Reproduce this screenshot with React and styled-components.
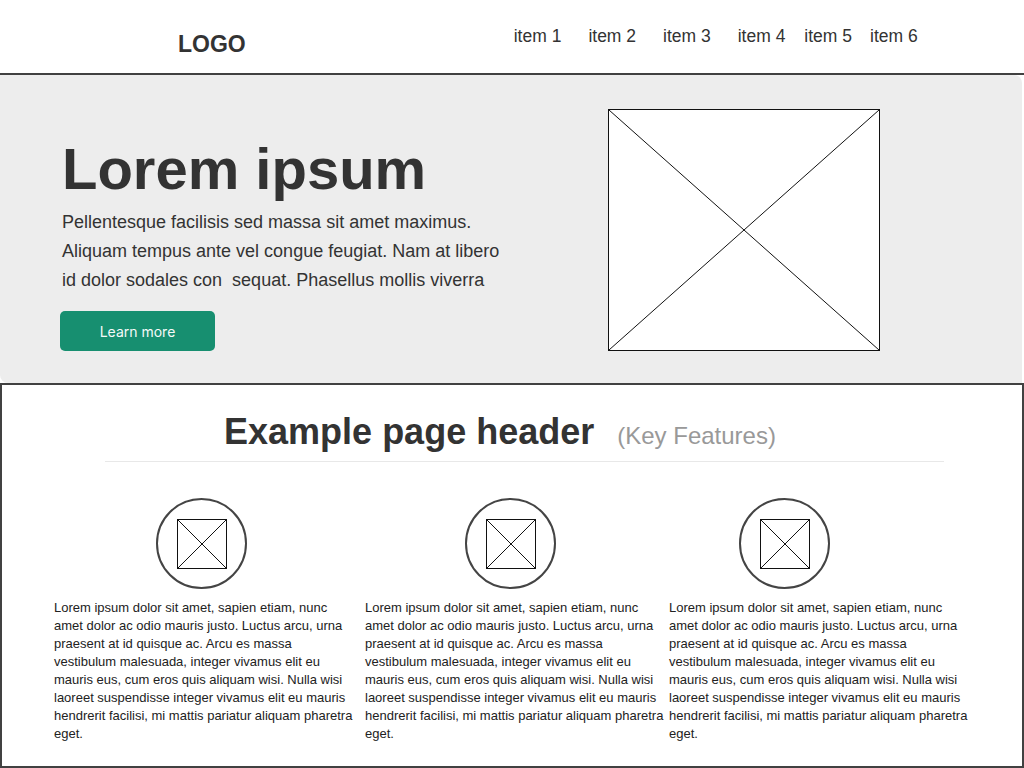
import React from "react";
import styled, { createGlobalStyle } from "styled-components";

const GlobalStyle = createGlobalStyle`
  html, body {
    margin: 0;
    padding: 0;
    background: #fff;
  }
  body {
    font-family: "Liberation Sans", Arial, sans-serif;
    color: #333;
  }
  * {
    box-sizing: border-box;
  }
`;

const Page = styled.div`
  width: 1024px;
  height: 768px;
  overflow: hidden;
`;

const Header = styled.header`
  height: 75px;
  display: flex;
  align-items: flex-start;
  padding-left: 178px;
  border-bottom: 2px solid #414141;
`;

const Logo = styled.div`
  margin-top: 33px;
  font-size: 23px;
  line-height: 1;
  font-weight: bold;
  color: #333;
`;

const Nav = styled.nav`
  display: flex;
  margin-left: 268px;
  margin-top: 28px;
`;

const NavItem = styled.a`
  margin-left: ${(props) => props.$gap}px;
  font-size: 17.5px;
  line-height: 1;
  color: #333;
  text-decoration: none;
`;

const Hero = styled.section`
  height: 308px;
  display: grid;
  grid-template-columns: 546px 272px;
  align-items: start;
  padding: 34px 0 0 62px;
  margin-right: 2px;
  background: #ededed;
  border-radius: 0 8px 0 8px;
`;

const HeroText = styled.div`
  padding-top: 31px;
`;

const HeroTitle = styled.h1`
  margin: 0;
  font-size: 58px;
  line-height: 1;
  font-weight: bold;
  color: #333;
`;

const HeroCopy = styled.p`
  margin: 10px 0 0;
  max-width: 450px;
  font-size: 18px;
  line-height: 29px;
  color: #333;
  white-space: pre-line;
`;

const Button = styled.button`
  margin: 16px 0 0 -2px;
  width: 155px;
  height: 40px;
  border: none;
  border-radius: 5px;
  background: #178f70;
  color: #f4faf8;
  font-family: Inter, "Liberation Sans", sans-serif;
  font-size: 14px;
  cursor: pointer;
`;

const Placeholder = styled.div`
  width: ${(props) => props.$w}px;
  height: ${(props) => props.$h}px;
  border: 1px solid #111;
  background: #fff;
  display: block;

  svg {
    display: block;
    width: 100%;
    height: 100%;
  }
`;

const Features = styled.section`
  height: 385px;
  border: 2px solid #414141;
  background: #fff;
`;

const TitleRow = styled.div`
  display: flex;
  justify-content: center;
  align-items: baseline;
  gap: 23px;
  padding: 29px 24px 0 0;
`;

const SectionTitle = styled.h2`
  margin: 0;
  font-size: 36px;
  line-height: 1;
  font-weight: bold;
  color: #333;
`;

const Subtitle = styled.span`
  font-size: 24px;
  color: #999;
`;

const Divider = styled.hr`
  margin: 11px 78px 0 103px;
  border: none;
  border-top: 1px solid #e8e8e8;
`;

const Columns = styled.div`
  display: grid;
  grid-template-columns: 311px 304px 320px;
  padding-left: 52px;
  margin-top: 36px;
`;

const Column = styled.div`
  display: flex;
  flex-direction: column;
`;

const Circle = styled.div`
  width: 91px;
  height: 91px;
  margin-left: ${(props) => props.$offset}px;
  border: 2px solid #444;
  border-radius: 50%;
  display: flex;
  align-items: center;
  justify-content: center;
`;

const ColumnText = styled.p`
  margin: 10px 0 0;
  max-width: 303px;
  font-size: 13px;
  line-height: 18px;
  color: #222;
`;

const Cross = () => (
  <svg viewBox="0 0 100 100" preserveAspectRatio="none">
    <line x1="0" y1="0" x2="100" y2="100" stroke="#111" strokeWidth="1" vectorEffect="non-scaling-stroke" />
    <line x1="100" y1="0" x2="0" y2="100" stroke="#111" strokeWidth="1" vectorEffect="non-scaling-stroke" />
  </svg>
);

const navItems = [
  { label: "item 1", gap: 0 },
  { label: "item 2", gap: 27 },
  { label: "item 3", gap: 27 },
  { label: "item 4", gap: 27 },
  { label: "item 5", gap: 19 },
  { label: "item 6", gap: 18 },
];

const featureText =
  "Lorem ipsum dolor sit amet, sapien etiam, nunc amet dolor ac odio mauris justo. Luctus arcu, urna praesent at id quisque ac. Arcu es massa vestibulum malesuada, integer vivamus elit eu mauris eus, cum eros quis aliquam wisi. Nulla wisi laoreet suspendisse integer vivamus elit eu mauris hendrerit facilisi, mi mattis pariatur aliquam pharetra eget.";

const heroCopy =
  "Pellentesque facilisis sed massa sit amet maximus.\nAliquam tempus ante vel congue feugiat. Nam at libero\nid dolor sodales con\u00a0 sequat. Phasellus mollis viverra";

const features = [{ offset: 102 }, { offset: 100 }, { offset: 70 }];

const App = () => {
  return (
    <Page>
      <GlobalStyle />
      <Header>
        <Logo>LOGO</Logo>
        <Nav>
          {navItems.map((item) => (
            <NavItem key={item.label} $gap={item.gap}>
              {item.label}
            </NavItem>
          ))}
        </Nav>
      </Header>

      <Hero>
        <HeroText>
          <HeroTitle>Lorem ipsum</HeroTitle>
          <HeroCopy>{heroCopy}</HeroCopy>
          <Button>Learn more</Button>
        </HeroText>
        <Placeholder $w={272} $h={242}>
          <Cross />
        </Placeholder>
      </Hero>

      <Features>
        <TitleRow>
          <SectionTitle>Example page header</SectionTitle>
          <Subtitle>(Key Features)</Subtitle>
        </TitleRow>
        <Divider />
        <Columns>
          {features.map((f, i) => (
            <Column key={i}>
              <Circle $offset={f.offset}>
                <Placeholder $w={50} $h={50}>
                  <Cross />
                </Placeholder>
              </Circle>
              <ColumnText>{featureText}</ColumnText>
            </Column>
          ))}
        </Columns>
      </Features>
    </Page>
  );
};

export default App;
